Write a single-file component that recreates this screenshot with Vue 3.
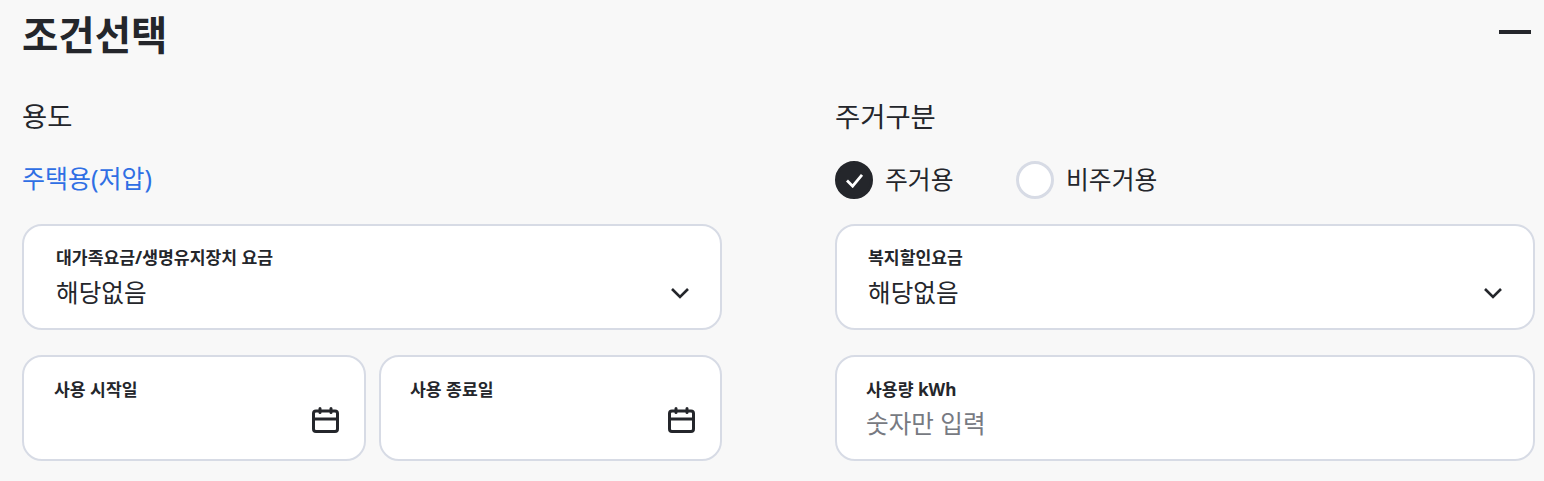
<template>
  <div class="page">
    <div class="head">
      <h2 class="head__title">조건선택</h2>
      <button class="head__toggle" aria-label="접기"></button>
    </div>
    <div class="columns">
      <section class="col">
        <h3 class="col__title">용도</h3>
        <p class="usage">주택용(저압)</p>
        <div class="field field_select">
          <span class="field__label">대가족요금/생명유지장치 요금</span>
          <span class="field__value">해당없음</span>
          <svg class="chevron" viewBox="0 0 20 12" fill="none"><path d="M2 2l8 8 8-8" stroke="#24262b" stroke-width="2.6" /></svg>
        </div>
        <div class="dates">
          <div v-for="d in dates" :key="d" class="field field_date">
            <span class="field__label">{{ d }}</span>
            <svg class="calendar" viewBox="0 0 27 26" fill="none" stroke="#24262b" stroke-width="3">
              <rect x="1.5" y="4" width="24" height="20.5" rx="2.5" />
              <path d="M1.5 12h24" />
              <path d="M8 1.5v4M19 1.5v4" stroke-linecap="round" />
            </svg>
          </div>
        </div>
      </section>
      <section class="col">
        <h3 class="col__title">주거구분</h3>
        <div class="radios">
          <label v-for="r in kinds" :key="r.name" class="radio">
            <span class="radio__dot" :class="{ radio__dot_on: r.on }">
              <svg v-if="r.on" viewBox="0 0 20 16" fill="none" class="radio__check"><path d="M2 8l6 6L18 2" stroke="#fff" stroke-width="3" /></svg>
            </span>
            <span class="radio__text">{{ r.name }}</span>
          </label>
        </div>
        <div class="field field_select field_right">
          <span class="field__label">복지할인요금</span>
          <span class="field__value">해당없음</span>
          <svg class="chevron" viewBox="0 0 20 12" fill="none"><path d="M2 2l8 8 8-8" stroke="#24262b" stroke-width="2.6" /></svg>
        </div>
        <div class="field field_amount">
          <span class="field__label">사용량 kWh</span>
          <span class="field__value field__value_empty">숫자만 입력</span>
        </div>
      </section>
    </div>
  </div>
</template>

<script setup>
const dates = ['사용 시작일', '사용 종료일']
const kinds = [
  { name: '주거용', on: true },
  { name: '비주거용', on: false },
]
</script>

<style>
body {
  background: #f8f8f8;
}
</style>

<style scoped>
.page {
  box-sizing: border-box;
  width: 1544px;
  height: 481px;
  padding: 0 9px 0 22px;
  overflow: hidden;
  background: #f8f8f8;
  color: #24262b;
  font-family: "Noto Sans", "Noto Sans CJK KR", sans-serif;
}

.head {
  display: flex;
  justify-content: space-between;
  align-items: center;
  height: 64px;
}

.head__title {
  margin: 6px 0 0;
  font-size: 39.5px;
  font-weight: 700;
  line-height: 64px;
}

.head__toggle {
  width: 32px;
  height: 4px;
  margin: -1px 4px 0 0;
  padding: 0;
  border: none;
  background: #24262b;
}

.columns {
  display: flex;
  gap: 113px;
}

.col {
  width: 700px;
}

.col__title {
  margin: 33px 0 0;
  font-size: 27.4px;
  font-weight: 400;
  line-height: 40px;
}

.usage {
  margin: 21px 0 0;
  height: 41px;
  color: #2f6fe4;
  font-size: 25px;
  line-height: 40px;
}

.radios {
  display: flex;
  gap: 62.6px;
  height: 38px;
  margin-top: 24px;
}

.radio {
  display: flex;
  align-items: center;
  gap: 12px;
  font-size: 24.8px;
}

.radio__text {
  margin-top: -4px;
}

.radio__dot {
  box-sizing: border-box;
  display: flex;
  align-items: center;
  justify-content: center;
  width: 38px;
  height: 38px;
  border: 3px solid #d7dbe5;
  border-radius: 50%;
  background: #fff;
}

.radio__dot_on {
  border-color: #24262b;
  background: #24262b;
}

.radio__check {
  width: 19px;
  height: 15px;
}

.field {
  position: relative;
  box-sizing: border-box;
  display: flex;
  flex-direction: column;
  height: 106px;
  border: 2px solid #d7dbe5;
  border-radius: 20px;
  background: #fff;
}

.field_select {
  margin-top: 25px;
  padding: 19px 32px;
}

.field_right {
  padding-left: 31px;
}

.field_date {
  flex: 1;
  padding: 20px 30px;
}

.field_date + .field_date {
  padding-left: 29px;
}

.field_amount {
  margin-top: 25px;
  padding: 20px 29px;
}

.field__label {
  font-size: 17.2px;
  font-weight: 700;
  line-height: 26px;
}

.field__value {
  font-size: 24.6px;
  line-height: 44px;
}

.field__value_empty {
  color: #777a82;
  line-height: 42px;
}

.dates {
  display: flex;
  gap: 13px;
  margin-top: 25px;
}

.chevron {
  position: absolute;
  right: 30px;
  top: 61px;
  width: 20px;
  height: 12px;
}

.calendar {
  position: absolute;
  right: 25px;
  top: 50px;
  width: 27px;
  height: 26px;
}
</style>
